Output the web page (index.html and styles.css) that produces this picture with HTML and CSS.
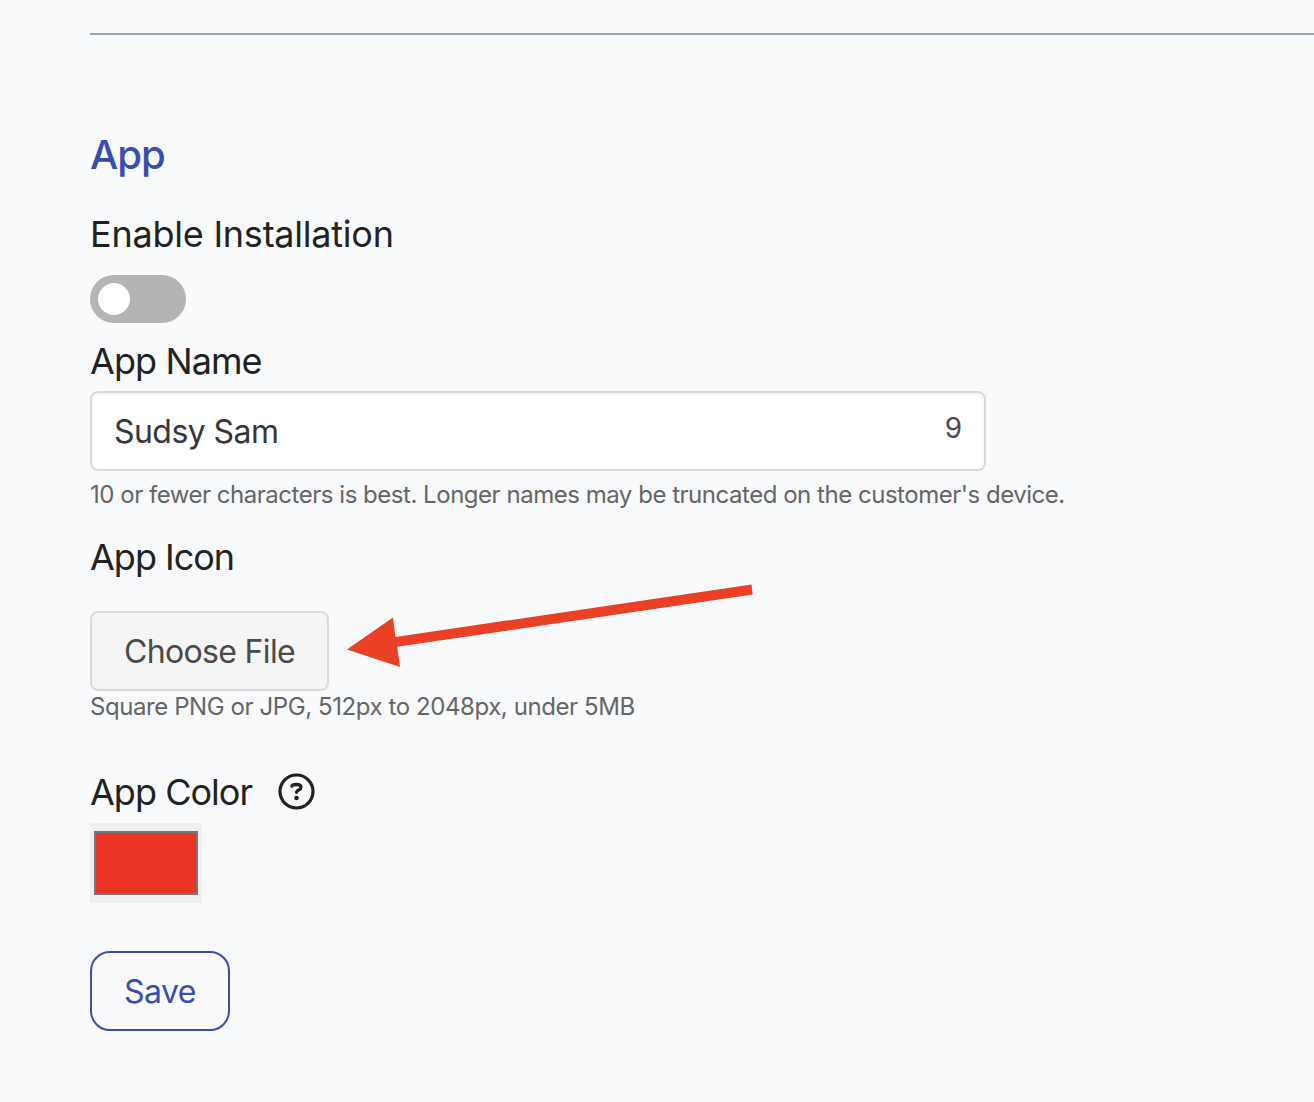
FILE: index.html
```html
<!DOCTYPE html>
<html lang="en">
<head>
<meta charset="utf-8">
<title>App settings</title>
<link rel="stylesheet" href="styles.css">
</head>
<body>
<main class="page">
  <hr class="divider">
  <form class="settings">
    <h2 class="title">App</h2>

    <div class="field field-toggle">
      <span class="label label-install">Enable Installation</span>
      <div class="toggle" role="switch" aria-checked="false"><span class="knob"></span></div>
    </div>

    <div class="field field-name">
      <span class="label label-name">App Name</span>
      <div class="input"><span class="value">Sudsy Sam</span><span class="count">9</span></div>
      <p class="hint hint-name">10 or fewer characters is best. Longer names may be truncated on the customer's device.</p>
    </div>

    <div class="field field-icon">
      <span class="label label-icon">App Icon</span>
      <div class="file-row">
        <button type="button" class="choose">Choose File</button>
        <svg class="arrow" width="408" height="86" viewBox="346 582 408 86" aria-hidden="true">
          <path d="M347 649.500L393 617.500L395.400 637L751.500 584.500L752.700 594.600L397.200 646.800L400 667Z" fill="#ea4025"/>
        </svg>
      </div>
      <p class="hint hint-icon">Square PNG or JPG, 512px to 2048px, under 5MB</p>
    </div>

    <div class="field field-color">
      <div class="label-row">
        <span class="label label-color">App Color</span>
        <svg class="help" width="38" height="38" viewBox="0 0 38 38" fill="none" stroke="#222" stroke-linecap="round" stroke-linejoin="round" aria-hidden="true">
          <circle cx="19.500" cy="18.500" r="16.500" stroke-width="3.200"/>
          <path d="M14.900 13C15.700 11.700 17.200 11.500 19.500 11.500C22.400 11.500 24 12.700 24 14.500C24 17.200 19.500 16.900 19.500 19.300" stroke-width="3.300"/>
          <circle cx="19.500" cy="25" r="2.300" fill="#222" stroke="none"/>
        </svg>
      </div>
      <div class="swatch"><span class="swatch-color"></span></div>
    </div>

    <button type="button" class="save">Save</button>
  </form>
</main>
</body>
</html>
```
FILE: styles.css
```css
* { box-sizing: border-box; }
body {
  margin: 0;
  background: #f9fafc;
  color: #222;
  font-family: Inter, "Liberation Sans", sans-serif;
  overflow: hidden;
}
.page { padding: 33px 0 0 90px; height: 1102px; }
.divider { margin: 0; border: 0; height: 2px; background: #94a3b8; }
.settings {
  display: flex;
  flex-direction: column;
  align-items: flex-start;
  padding-top: 96px;
}
.title {
  margin: 0;
  font-size: 40px;
  line-height: 48px;
  font-weight: 500;
  letter-spacing: -1px;
  color: #3a4eb1;
}
.field { display: flex; flex-direction: column; align-items: flex-start; white-space: nowrap; }
.label { font-size: 36px; line-height: 44px; }
.label-install { letter-spacing: -.23px; }
.label-name { letter-spacing: -.9px; }
.label-icon { letter-spacing: -1px; }
.field-toggle { margin-top: 33px; gap: 19px; }
.toggle {
  width: 96px;
  height: 48px;
  padding: 8px;
  border-radius: 24px;
  background: #b4b4b4;
}
.knob { display: block; width: 32px; height: 32px; border-radius: 50%; background: #fff; }
.field-name { margin-top: 16px; }
.input {
  display: flex;
  justify-content: space-between;
  width: 896px;
  height: 80px;
  margin-top: 8px;
  padding: 0 22px;
  border: 2px solid #d9d9d9;
  border-radius: 8px;
  background: #fff;
  box-shadow: inset 0 2px 4px rgba(0, 0, 0, .06);
  color: #363636;
}
.value { font-size: 32px; line-height: 78px; letter-spacing: -.55px; }
.count { font-size: 28px; line-height: 70px; color: #4a4a4a; }
.hint { margin: 0; font-size: 24px; line-height: 30px; color: #666; }
.hint-name { margin-top: 9px; letter-spacing: -.475px; }
.field-icon { margin-top: 25px; }
.file-row { display: flex; align-items: flex-start; gap: 17px; height: 80px; margin-top: 32px; }
.choose {
  width: 239px;
  height: 80px;
  padding: 1px 0 0;
  border: 2px solid #d9d9d9;
  border-radius: 8px;
  background: #f5f5f5;
  color: #4a4a4a;
  font: 400 32px/75px Inter, "Liberation Sans", sans-serif;
  letter-spacing: -.65px;
}
.arrow { display: block; margin-top: -29px; }
.hint-icon { margin-top: 1px; letter-spacing: -.42px; }
.field-color { margin-top: 48px; }
.label-row { display: flex; align-items: center; gap: 25px; }
.label-color { width: 162px; letter-spacing: -.97px; }
.swatch { width: 112px; height: 80px; margin-top: 9px; padding: 8px 4px; background: #efefef; }
.swatch-color { display: block; height: 64px; border: 2px solid #767676; background: #ea3323; }
.save {
  width: 140px;
  height: 80px;
  margin-top: 48px;
  padding: 1px 0 0;
  border: 2px solid #3a4eb1;
  border-radius: 20px;
  background: transparent;
  color: #3a4eb1;
  font: 400 32px/75px Inter, "Liberation Sans", sans-serif;
  letter-spacing: -.5px;
}
```
